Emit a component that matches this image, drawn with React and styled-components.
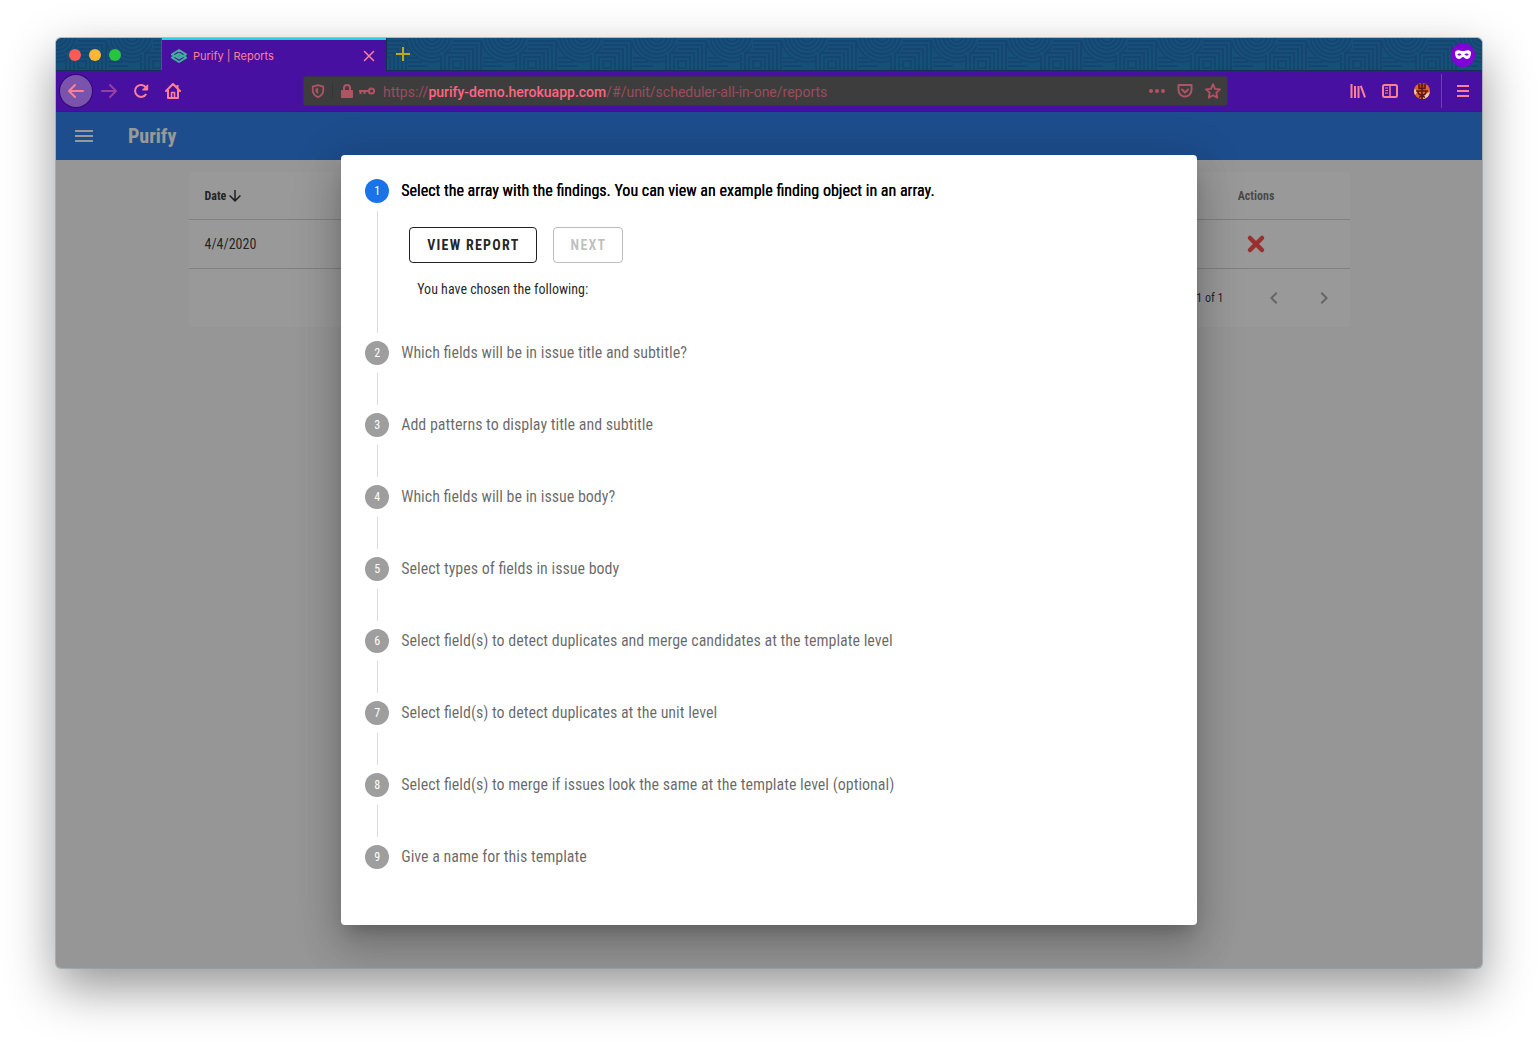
import React from "react";
import styled, { createGlobalStyle } from "styled-components";

const condensed = `"Roboto Condensed", Roboto, sans-serif`;
const system = `Inter, Roboto, sans-serif`;

const GlobalStyle = createGlobalStyle`
  *, *::before, *::after { box-sizing: border-box; }
  body { margin: 0; background: #fff; }
  svg { display: block; flex: none; }
`;

const Desktop = styled.div`
  display: flex;
  min-height: 100vh;
  padding: 38px 56px 74px;
`;

const Window = styled.div`
  flex: 1;
  min-width: 0;
  display: flex;
  flex-direction: column;
  overflow: hidden;
  border-radius: 5px;
  background: #fafafa;
  box-shadow: 0 0 0 1px rgba(140, 150, 155, 0.6), 0 20px 50px rgba(0, 0, 0, 0.42);
`;

const TitleBar = styled.header`
  position: relative;
  display: flex;
  height: 33px;
  background: #174f7b;
  border-bottom: 1px solid #0f3450;
`;

const Pattern = styled.svg`
  position: absolute;
  inset: 0;
  width: 100%;
  height: 100%;
`;

const TrafficLights = styled.div`
  position: relative;
  display: flex;
  align-items: center;
  gap: 8px;
  width: 106px;
  padding: 2px 0 0 13px;
  border-right: 1px solid #2f6473;
`;

const Light = styled.button`
  width: 12px;
  height: 12px;
  padding: 0;
  border: 0;
  border-radius: 50%;
  background: ${(p) => p.$color};
`;

const Tab = styled.div`
  position: relative;
  display: flex;
  align-items: center;
  width: 224px;
  height: 33px;
  padding: 0 8px 0 9px;
  gap: 6px;
  background: #4810a0;
  border-top: 2px solid #1fd6dc;
  color: #ff8095;
  font: 400 11px/16px ${system};
`;

const TabTitle = styled.span`
  flex: 1;
`;

const IconButton = styled.button`
  display: flex;
  align-items: center;
  justify-content: center;
  width: ${(p) => p.$w || 32}px;
  height: ${(p) => p.$h || 32}px;
  padding: 0;
  border: 0;
  border-radius: ${(p) => (p.$round ? "50%" : "0")};
  background: ${(p) => p.$bg || "transparent"};
  color: ${(p) => p.$color || "#ff8095"};
`;

const BackButton = styled(IconButton)`
  margin-right: 1px;
  box-shadow: 0 0 0 1px rgba(30, 5, 90, 0.6);
`;

const NewTab = styled(IconButton)`
  position: relative;
  border-left: 1px solid #0f3450;
`;

const PrivateBadge = styled.div`
  position: relative;
  display: flex;
  align-items: center;
  justify-content: center;
  align-self: center;
  width: 24px;
  height: 24px;
  margin: 2px 7px 0 auto;
  border-radius: 50%;
  background: #8000d7;
`;

const Toolbar = styled.nav`
  display: flex;
  align-items: center;
  height: 41px;
  padding: 0 3px 0 4px;
  background: #4810a0;
  border-bottom: 1px solid #21286a;
`;

const UrlBar = styled.div`
  flex: 1;
  min-width: 0;
  display: flex;
  align-items: center;
  height: 30px;
  margin: 0 114px;
  border-radius: 3px;
  border: 1px solid #39305a;
  background: #3e3d3e;
  color: #b05464;
`;

const UrlIcons = styled.div`
  display: flex;
  align-items: center;
  gap: 5px;
  padding-left: 7px;
  border-left: 1px solid #363536;
`;

const Url = styled.a`
  flex: 1;
  min-width: 0;
  overflow: hidden;
  white-space: nowrap;
  padding: 2px 0 0 8px;
  color: #9a4d5b;
  font: 400 14px/20px Roboto, sans-serif;
  text-decoration: none;
`;

const Host = styled.span`
  color: #ff6680;
  font-weight: 500;
`;

const Separator = styled.div`
  width: 1px;
  height: 34px;
  margin: 0 5px 0 3px;
  background: #6f3fb8;
`;

const Page = styled.div`
  position: relative;
  flex: 1;
  display: flex;
  flex-direction: column;
  font-family: ${condensed};
`;

const AppBar = styled.div`
  display: flex;
  align-items: center;
  gap: 20px;
  height: 48px;
  padding: 0 4px;
  background: #1a73e8;
  color: #fff;
`;

const AppTitle = styled.h1`
  margin: 0;
  font-size: 20px;
  line-height: 30px;
  font-weight: 700;
`;

const Container = styled.main`
  width: 100%;
  max-width: 1185px;
  margin: 0 auto;
  padding: 12px;
`;

const TableCard = styled.section`
  border-radius: 4px;
  background: #fff;
  color: rgba(0, 0, 0, 0.87);
`;

const Table = styled.table`
  width: 100%;
  border-collapse: separate;
  border-spacing: 0;
`;

const HeadCell = styled.th`
  height: 48px;
  padding: 0 16px;
  border-bottom: 1px solid rgba(0, 0, 0, 0.18);
  color: ${(p) => (p.$active ? "rgba(0,0,0,.87)" : "rgba(0,0,0,.6)")};
  font-size: 12px;
  line-height: 18px;
  font-weight: 700;
  text-align: ${(p) => (p.$center ? "center" : "left")};
  width: ${(p) => (p.$center ? "187px" : "auto")};
`;

const SortLabel = styled.span`
  display: flex;
  align-items: center;
`;

const Cell = styled.td`
  height: 49px;
  padding: 0 16px;
  border-bottom: 1px solid rgba(0, 0, 0, 0.18);
  font-size: 14px;
  line-height: 20px;
`;

const DeleteButton = styled(IconButton)`
  margin: 0 auto;
`;

const TableFooter = styled.footer`
  display: flex;
  align-items: center;
  justify-content: flex-end;
  gap: 14px;
  height: 58px;
  padding-right: 8px;
  font-size: 12px;
  line-height: 18px;
`;

const Range = styled.span`
  margin-right: 18px;
`;

const Overlay = styled.div`
  position: absolute;
  inset: 0;
  display: flex;
  align-items: center;
  justify-content: center;
  background: rgba(33, 33, 33, 0.46);
`;

const Dialog = styled.div`
  width: 60%;
  padding: 24px 24px 8px;
  border-radius: 4px;
  background: #fff;
  box-shadow: 0 11px 15px -7px rgba(0, 0, 0, 0.2), 0 24px 38px 3px rgba(0, 0, 0, 0.14),
    0 9px 46px 8px rgba(0, 0, 0, 0.12);
`;

const Steps = styled.ol`
  margin: 0;
  padding: 0;
  list-style: none;
`;

const StepItem = styled.li`
  display: flex;
  gap: 12px;
  min-height: 72px;
`;

const Rail = styled.div`
  display: flex;
  flex-direction: column;
  align-items: center;
  width: 24px;
`;

const Circle = styled.span`
  display: flex;
  align-items: center;
  justify-content: center;
  width: 24px;
  height: 24px;
  border-radius: 50%;
  background: ${(p) => (p.$active ? "#1a73e8" : "#9e9e9e")};
  color: #fff;
  font-size: 12px;
  line-height: 16px;
`;

const Line = styled.span`
  flex: 1;
  width: 1px;
  margin: 8px 0;
  background: rgba(0, 0, 0, 0.14);
`;

const StepBody = styled.div`
  flex: 1;
`;

const StepTitle = styled.div`
  color: ${(p) => (p.$active ? "#000" : "rgba(0,0,0,.6)")};
  text-shadow: ${(p) => (p.$active ? "0 0 0 #000" : "none")};
  font-size: 16px;
  line-height: 24px;
`;

const StepContent = styled.div`
  padding: 24px 8px 42px;
`;

const Actions = styled.div`
  display: flex;
  gap: 16px;
`;

const OutlinedButton = styled.button`
  height: 36px;
  padding: 0 16px 0 17px;
  border: 1px solid currentColor;
  border-radius: 4px;
  background: transparent;
  color: rgba(0, 0, 0, 0.87);
  font: 700 14px/20px ${condensed};
  letter-spacing: 0.09em;
  text-transform: uppercase;
  &:disabled {
    color: rgba(0, 0, 0, 0.26);
  }
`;

const Chosen = styled.p`
  margin: 16px 8px 0;
  color: rgba(0, 0, 0, 0.87);
  font-size: 14px;
  line-height: 20px;
`;

const Icon = ({ size = 16, sw = 2, children, ...rest }) => (
  <svg
    width={size}
    height={size}
    viewBox="0 0 16 16"
    fill="none"
    stroke="currentColor"
    strokeWidth={sw}
    strokeLinecap="round"
    strokeLinejoin="round"
    aria-hidden="true"
    {...rest}
  >
    {children}
  </svg>
);

const BarPattern = () => (
  <Pattern aria-hidden="true">
    <defs>
      <pattern id="maze" x="51" y="0" width="75" height="32" patternUnits="userSpaceOnUse">
        <g fill="none" stroke="#14466f" strokeWidth="2">
          {[6, 10, 14, 18, 22, 26].map((r) => (
            <circle key={r} cx="25" cy="-2" r={r} />
          ))}
          <path d="M0 16 8 18 22 32H0zM33 14h42v18H33zM45 0h30v14H45z" fill="#174f7b" stroke="none" />
          <path d="M1 20h10M1 24h15M1 28h20" />
          <path d="M46 3h28M46 7h24v25M46 11h20v21" />
          <path d="M74 3v29M34 32V17M62 32V15H38v17" />
          <rect x="42" y="19" width="16" height="16" />
          <rect x="46" y="23" width="8" height="7" />
        </g>
      </pattern>
    </defs>
    <rect width="100%" height="100%" fill="url(#maze)" />
  </Pattern>
);

const steps = [
  "Select the array with the findings. You can view an example finding object in an array.",
  "Which fields will be in issue title and subtitle?",
  "Add patterns to display title and subtitle",
  "Which fields will be in issue body?",
  "Select types of fields in issue body",
  "Select field(s) to detect duplicates and merge candidates at the template level",
  "Select field(s) to detect duplicates at the unit level",
  "Select field(s) to merge if issues look the same at the template level (optional)",
  "Give a name for this template",
];

function BrowserTabs() {
  return (
    <TitleBar>
      <BarPattern />
      <TrafficLights>
        <Light $color="#ff5b53" aria-label="Close window" />
        <Light $color="#fdb731" aria-label="Minimize window" />
        <Light $color="#27c43c" aria-label="Zoom window" />
      </TrafficLights>
      <Tab>
        <svg width="16" height="16" viewBox="0 0 16 16" fill="none" stroke="#3fae9e" strokeWidth="2" strokeLinejoin="round" aria-hidden="true">
          <path d="M4.500 8.500 1 6.300 8 2l7 4.300L8 10.500 5 8.700 9.500 6" />
          <path d="M11.500 7.500 15 9.700 8 14 1 9.700 8 5.500l3 1.800L6.500 10" />
        </svg>
        <TabTitle>Purify | Reports</TabTitle>
        <IconButton $w={18} $h={18} aria-label="Close tab">
          <Icon sw={1.5}>
            <path d="M3.5 3.5l9 9M12.5 3.5l-9 9" />
          </Icon>
        </IconButton>
      </Tab>
      <NewTab $color="#b8ad12" aria-label="New tab">
        <Icon sw={2} strokeLinecap="butt">
          <path d="M8 1v14M1 8h14" />
        </Icon>
      </NewTab>
      <PrivateBadge>
        <svg width="16" height="10" viewBox="0 0 16 10" fill="#fff" fillRule="evenodd" aria-hidden="true">
          <path d="M0 3C0 .8 1.6 0 3.600 .2 5.500 .3 6.500 1 8 1S10.500 .3 12.400 .2C14.400 0 16 .8 16 3c0 3-1.500 6-4 6C9.800 9 9.300 7 8 7S6.200 9 4 9C1.500 9 0 6 0 3zM2.200 4.600C3.200 6 5.500 6 6.500 4.600 5.500 3.200 3.200 3.200 2.200 4.600zM9.500 4.600c1 1.400 3.300 1.400 4.300 0-1-1.400-3.300-1.400-4.300 0z" />
        </svg>
      </PrivateBadge>
    </TitleBar>
  );
}

function BrowserToolbar() {
  return (
    <Toolbar>
      <BackButton $round $bg="#7a53ac" aria-label="Back">
        <Icon>
          <path d="M15 8H1.500M7 2 1 8l6 6" />
        </Icon>
      </BackButton>
      <IconButton $color="#9440a0" aria-label="Forward">
        <Icon>
          <path d="M1 8h13.500M9 2l6 6-6 6" />
        </Icon>
      </IconButton>
      <IconButton aria-label="Reload">
        <Icon strokeLinecap="butt">
          <path d="M13.200 11A6 6 0 1 1 13 4.500" />
          <path d="M14.700 1.800V7H9.500z" fill="currentColor" strokeWidth="1" />
        </Icon>
      </IconButton>
      <IconButton aria-label="Home">
        <Icon>
          <path d="M1 8l7-7 7 7M3 7v8h10V7" />
          <path d="M6.500 14.500V9.500h3v5" strokeWidth="1.600" />
          <path d="M12.500 2v3" strokeLinecap="butt" />
        </Icon>
      </IconButton>
      <UrlBar>
        <IconButton $w={28} $h={28} $color="#b05464" aria-label="Tracking protection">
          <Icon size={14}>
            <path d="M8 1.300 14 3v4.500c0 3.500-2.500 6-6 7.500-3.500-1.500-6-4-6-7.500V3z" />
            <path d="M8 4.800v6.400C6.300 10.200 5.300 9 5.300 7.300V5.500z" fill="currentColor" strokeWidth=".4" />
          </Icon>
        </IconButton>
        <UrlIcons>
          <svg width="14" height="16" viewBox="0 0 14 16" fill="currentColor" aria-hidden="true">
            <rect x="1" y="7" width="12" height="8" rx="1" />
            <path d="M4 8V5a3 3 0 0 1 6 0v3" fill="none" stroke="currentColor" strokeWidth="2" />
          </svg>
          <svg width="16" height="8" viewBox="0 0 16 8" fill="none" stroke="currentColor" strokeWidth="2" aria-hidden="true">
            <circle cx="12.500" cy="4" r="2.600" />
            <path d="M10 4H0M1.500 4v3M5.500 4v3" />
          </svg>
        </UrlIcons>
        <Url href="#/unit/scheduler-all-in-one/reports">
          https://<Host>purify-demo.herokuapp.com</Host>/#/unit/scheduler-all-in-one/reports
        </Url>
        <IconButton $w={28} $h={28} $color="#b05464" aria-label="Page actions">
          <svg width="18" height="4" viewBox="0 0 18 4" fill="currentColor" aria-hidden="true">
            <circle cx="3" cy="2" r="2" />
            <circle cx="9" cy="2" r="2" />
            <circle cx="15" cy="2" r="2" />
          </svg>
        </IconButton>
        <IconButton $w={28} $h={28} $color="#b05464" aria-label="Save to Pocket">
          <Icon>
            <path d="M1.500 2h13v5a6.500 6.500 0 0 1-13 0z" />
            <path d="M5 6.500l3 3 3-3" />
          </Icon>
        </IconButton>
        <IconButton $w={28} $h={28} $color="#b05464" aria-label="Bookmark">
          <Icon sw={1.8}>
            <path d="M8 1.200l2 4.600 5 .5-3.700 3.400 1 5L8 12.200 3.700 14.700l1-5L1 6.300l5-.5z" />
          </Icon>
        </IconButton>
      </UrlBar>
      <IconButton aria-label="Library">
        <Icon strokeLinecap="butt">
          <path d="M1.500 1v14M5 3v12M8.500 3v12M10.800 2.800l4.200 11.600" />
        </Icon>
      </IconButton>
      <IconButton aria-label="Sidebars">
        <Icon>
          <rect x="1" y="2" width="14" height="12" rx="1.500" />
          <path d="M8 2v12" strokeWidth="1.500" />
          <path d="M3 5h3M3.500 7.500H6M3 10h3" strokeWidth="1" strokeLinecap="butt" />
        </Icon>
      </IconButton>
      <IconButton aria-label="Account">
        <svg width="16" height="16" viewBox="0 0 16 16" aria-hidden="true">
          <circle cx="8" cy="8" r="8" fill="#e0652f" />
          <path d="M1 12a8 8 0 0 1-.5-6L4 8zM15.800 9A8 8 0 0 1 9 15.900L11 11z" fill="#f0c9a4" />
          <path d="M4 1.200 8 0l4 1.200L11 5H5z" fill="#c23d1c" />
          <g fill="none" stroke="#5c1512" strokeWidth="1.500">
            <path d="M8 0v16M5 1v4.500h6V1M2 8h12M4 8.500c0 2.500 1.500 3.500 4 3.500s4-1 4-3.500M5 14.500l3-2 3 2" />
          </g>
        </svg>
      </IconButton>
      <Separator />
      <IconButton aria-label="Menu">
        <Icon strokeLinecap="butt">
          <path d="M2 3h12M2 8h12M2 13h12" />
        </Icon>
      </IconButton>
    </Toolbar>
  );
}

function ReportsTable() {
  return (
    <TableCard>
      <Table>
        <thead>
          <tr>
            <HeadCell $active scope="col">
              <SortLabel>
                Date
                <svg width="18" height="18" viewBox="0 0 24 24" fill="currentColor" aria-hidden="true">
                  <path d="M11 4h2v12l5.500-5.500 1.420 1.420L12 19.840l-7.920-7.920L5.500 10.500 11 16V4z" />
                </svg>
              </SortLabel>
            </HeadCell>
            <HeadCell $center scope="col">Actions</HeadCell>
          </tr>
        </thead>
        <tbody>
          <tr>
            <Cell>4/4/2020</Cell>
            <Cell>
              <DeleteButton $color="#ff3b3b" aria-label="Delete report">
                <svg width="24" height="24" viewBox="0 0 24 24" fill="none" stroke="currentColor" strokeWidth="4.500" strokeLinecap="round" aria-hidden="true">
                  <path d="M6 6l12 12M18 6 6 18" />
                </svg>
              </DeleteButton>
            </Cell>
          </tr>
        </tbody>
      </Table>
      <TableFooter>
        <Range>1-1 of 1</Range>
        <IconButton $w={36} $h={36} $color="rgba(0,0,0,.38)" disabled aria-label="Previous page">
          <svg width="24" height="24" viewBox="0 0 24 24" fill="currentColor" aria-hidden="true">
            <path d="M15.410 16.580 10.830 12l4.580-4.590L14 6l-6 6 6 6z" />
          </svg>
        </IconButton>
        <IconButton $w={36} $h={36} $color="rgba(0,0,0,.38)" disabled aria-label="Next page">
          <svg width="24" height="24" viewBox="0 0 24 24" fill="currentColor" aria-hidden="true">
            <path d="M8.590 16.580 13.170 12 8.590 7.410 10 6l6 6-6 6z" />
          </svg>
        </IconButton>
      </TableFooter>
    </TableCard>
  );
}

function TemplateDialog() {
  return (
    <Overlay>
      <Dialog role="dialog" aria-modal="true">
        <Steps>
          {steps.map((title, i) => (
            <StepItem key={title}>
              <Rail>
                <Circle $active={i === 0}>{i + 1}</Circle>
                {i < steps.length - 1 && <Line />}
              </Rail>
              <StepBody>
                <StepTitle $active={i === 0}>{title}</StepTitle>
                {i === 0 && (
                  <StepContent>
                    <Actions>
                      <OutlinedButton>View report</OutlinedButton>
                      <OutlinedButton disabled>Next</OutlinedButton>
                    </Actions>
                    <Chosen>You have chosen the following:</Chosen>
                  </StepContent>
                )}
              </StepBody>
            </StepItem>
          ))}
        </Steps>
      </Dialog>
    </Overlay>
  );
}

export default function App() {
  return (
    <>
      <GlobalStyle />
      <Desktop>
        <Window>
          <BrowserTabs />
          <BrowserToolbar />
          <Page>
            <AppBar>
              <IconButton $w={48} $h={48} $color="#fff" aria-label="Open navigation">
                <svg width="24" height="24" viewBox="0 0 24 24" fill="currentColor" aria-hidden="true">
                  <path d="M3 6h18v2H3V6m0 5h18v2H3v-2m0 5h18v2H3v-2z" />
                </svg>
              </IconButton>
              <AppTitle>Purify</AppTitle>
            </AppBar>
            <Container>
              <ReportsTable />
            </Container>
            <TemplateDialog />
          </Page>
        </Window>
      </Desktop>
    </>
  );
}
